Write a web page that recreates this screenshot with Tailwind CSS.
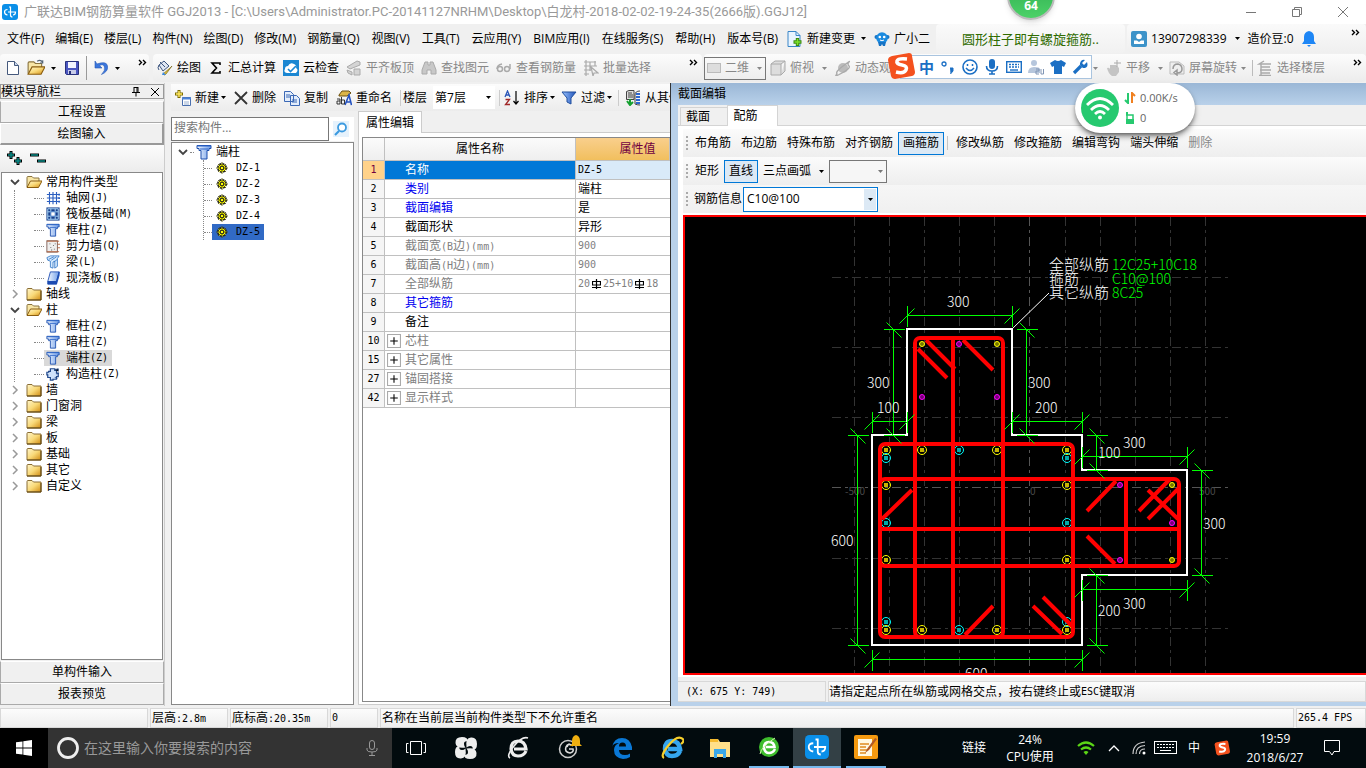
<!DOCTYPE html>
<html lang="zh-CN">
<head>
    <meta charset="UTF-8">
    <meta name="viewport" content="width=device-width, initial-scale=1.0">
    <title>广联达BIM钢筋算量软件 GGJ2013</title>
    <script src="https://cdn.jsdelivr.net/npm/@tailwindcss/browser@4"></script>
</head>
<body class="h-screen flex flex-col overflow-hidden bg-[#f0f0f0] text-black text-xs leading-4 whitespace-nowrap [font-family:'Open_Sans','Noto_Sans_CJK_SC',sans-serif]">

    <!-- icon sprite -->
    <svg class="absolute size-0">
        <defs>
            <linearGradient id="gold" x1="0" y1="0" x2="1" y2="1"><stop offset="0" stop-color="#fff6cc"/><stop offset=".5" stop-color="#f9d978"/><stop offset="1" stop-color="#d08a10"/></linearGradient>
            <linearGradient id="steel" x1="0" y1="0" x2="1" y2="0"><stop offset="0" stop-color="#f4f9ff"/><stop offset="1" stop-color="#6f9de8"/></linearGradient>
            <linearGradient id="funnel" x1="0" y1="0" x2="1" y2="0"><stop offset="0" stop-color="#9cc4ff"/><stop offset="1" stop-color="#1c50b8"/></linearGradient>
            <symbol id="logo" viewBox="0 0 16 16"><rect width="16" height="16" rx="3" fill="#0a8fe8"/><path d="M7 3h1.500v8q0 2 2 2M5.500 5.500Q2.500 5.500 2.500 8t3 3M6 8h7.500q0 3-2.500 3" fill="none" stroke="#fff" stroke-width="1.200"/></symbol>
            <symbol id="folder" viewBox="0 0 16 16"><path d="M1 3.500q0-1 1-1h4l1.500 1.500H15V14H1z" fill="url(#gold)" stroke="#8a6d35"/><path d="M1 14h14V5" fill="none" stroke="#5c430c"/></symbol>
            <symbol id="folder-open" viewBox="0 0 16 16"><path d="M1 13V3.500q0-1 1-1h4L7.500 4H13v3" fill="#f8e6a6" stroke="#8a7440"/><path d="M1 13.500 4.500 7H16l-3.500 6.500z" fill="url(#gold)" stroke="#8a5d10"/></symbol>
            <symbol id="column" viewBox="0 0 16 16"><path d="M1 1.500h14v3h-2v2h-2V15H5V6.500H3v-2H1z" fill="url(#steel)" stroke="#1c4fae"/><path d="M1 2h14M4 5h8" stroke="#2a63c8"/></symbol>
            <symbol id="axis" viewBox="0 0 16 16"><path d="M4 1v14M8 1v14M12 1v14M1 4h14M1 8h14M1 12h14" stroke="#2c5fc0" stroke-width="1.300"/><path d="M14 3h2v2h-2zM14 7h2v2h-2zM14 11h2v2h-2z" fill="#2c5fc0"/></symbol>
            <symbol id="raft" viewBox="0 0 16 16"><rect x=".5" y=".5" width="15" height="15" fill="#173f8c"/><path d="M2 2h12v12H2zM5.500 2v12M10.500 2v12M2 5.500h12M2 10.500h12" fill="none" stroke="#b8e2ff"/><rect x="5.500" y="5.500" width="5" height="5" fill="#fff" stroke="#2e67b9"/></symbol>
            <symbol id="wall" viewBox="0 0 16 16"><rect x="1" y="2" width="12" height="13" fill="#eee" stroke="#7a5a50"/><path d="M1 2.500h14M1 14.500h14M13 6h3M13 10h3" stroke="#b4603c"/><path d="M4 5h1v1H4zM8 7h1v1H8zM5 9h1v1H5zM9 11h1v1H9zM6 12h1v1H6zM10 5h1v1h-1z" fill="#444"/></symbol>
            <symbol id="beam" viewBox="0 0 16 16"><path d="M1 3 5 1h10l-2 3v9l-3 2V7l-2 1v7l-3-1V7L2 6z" fill="#d6ebff" stroke="#3a7cc8"/><path d="m3 5 6-3M6 6l6-4M9 8l4-3" stroke="#3a7cc8"/></symbol>
            <symbol id="slab" viewBox="0 0 16 16"><path d="M5 1h10l-3 11H2z" fill="url(#steel)" stroke="#1b4bb2"/><path d="M2 12h10v3H2zM12 12l3-11v4l-3 10" fill="#1b4bb2" stroke="#1b4bb2"/></symbol>
            <symbol id="tie" viewBox="0 0 16 16"><path d="M5 2h5v2h2v3h2v4h-2v3H8v1H5v-3H2V9H1V6h2V5h2z" fill="#cfe2fb" stroke="#234a8c" stroke-width="1.400"/><path d="m10 3 4-1v3M12 8l3-1M10 12l3 1" stroke="#234a8c"/></symbol>
            <symbol id="gear" viewBox="0 0 12 12"><circle cx="6" cy="6" r="4.200" fill="#ff0" stroke="#222" stroke-width="1.600" stroke-dasharray="2 1.300"/><path d="M6 0v12M0 6h12M2 2l8 8M10 2l-8 8" stroke="#4a4800" stroke-width=".8"/><circle cx="6" cy="6" r="1.800" fill="#ff0" stroke="#222"/></symbol>
            <symbol id="down" viewBox="0 0 5 3"><path d="M0 0h5L2.500 3z" fill="currentColor"/></symbol>
            <symbol id="open" viewBox="0 0 10 10"><path d="m1 3 4 4 4-4" fill="none" stroke="#444" stroke-width="1.800"/></symbol>
            <symbol id="shut" viewBox="0 0 10 10"><path d="m3 1 4 4-4 4" fill="none" stroke="#999" stroke-width="1.500"/></symbol>
            <symbol id="more" viewBox="0 0 9 7"><path d="m1 1 2.500 2.500L1 6M5 1l2.500 2.500L5 6" fill="none" stroke="#000" stroke-width="1.400"/></symbol>
            <symbol id="sogou" viewBox="0 0 28 28"><path d="M5 4 22 1q3 0 3 3l3 16q0 3-3 4L8 27q-3 0-4-3L1 8q0-3 4-4z" fill="#f4511e"/><path d="M20 7q-9-1-10 2t5 4 4 5-10 2" fill="none" stroke="#fff" stroke-width="3.600"/></symbol>
            <symbol id="rebar" viewBox="0 0 9 10"><path d="M4.500 0v10M0 8.500h9M.5 2.500h8v3.500h-8z" fill="none" stroke="#000" stroke-width="1.200"/></symbol>
        </defs>
    </svg>

    <!-- title bar -->
    <header class="h-6 shrink-0 flex items-center bg-white text-[#999] pl-0.5">
        <svg class="size-4"><use href="#logo"/></svg>
        <h1 class="ml-1.5 text-[13px] [font-family:Roboto,'Noto_Sans_CJK_SC',sans-serif]">广联达BIM钢筋算量软件 GGJ2013 - [C:\Users\Administrator.PC-20141127NRHM\Desktop\白龙村-2018-02-02-19-24-35(2666版).GGJ12]</h1>
        <div class="ml-auto flex items-center gap-9 pr-[18px]">
            <button aria-label="最小化"><svg class="w-2.5 h-2.5" viewBox="0 0 10 10"><path d="M0 5.500h10" stroke="#777"/></svg></button>
            <button aria-label="还原"><svg class="w-2.5 h-2.5" viewBox="0 0 10 10"><path d="M.5 2.500h7v7h-7zM2.500 2.500v-2h7v7h-2" fill="none" stroke="#777"/></svg></button>
            <button aria-label="关闭"><svg class="w-2.5 h-2.5" viewBox="0 0 10 10"><path d="m0 0 10 10M10 0 0 10" stroke="#777"/></svg></button>
        </div>
    </header>

    <!-- menu bar -->
    <nav class="h-[29px] shrink-0 flex items-center">
        <div class="flex items-center gap-3 pl-[7px] w-[781px] shrink-0">
            <div class="flex gap-[11px]">
                <button>文件(F)</button><button>编辑(E)</button><button>楼层(L)</button><button>构件(N)</button><button>绘图(D)</button><button>修改(M)</button><button>钢筋量(Q)</button>
            </div>
            <button>视图(V)</button><button>工具(T)</button><button>云应用(Y)</button><button>BIM应用(I)</button><button>在线服务(S)</button><button>帮助(H)</button><button>版本号(B)</button>
        </div>
        <button class="flex items-center ml-1.5 gap-1">
            <svg class="size-4" viewBox="0 0 16 16"><path d="M1 .5h8l4 4v11H1z" fill="#e8f4ff" stroke="#3a86c8"/><path d="M9 .5v4h4" fill="none" stroke="#3a86c8"/><path d="M10.500 7v8M6.500 11h8" stroke="#3a8a10" stroke-width="3.400"/><path d="M10.500 8v6M7.500 11h6" stroke="#7be02c" stroke-width="1.500"/></svg>
            新建变更<svg class="w-[5px] h-[3px] ml-0.5"><use href="#down"/></svg>
        </button>
        <button class="flex items-center ml-2 gap-1 w-[62px]">
            <svg class="size-4" viewBox="0 0 16 16"><circle cx="2.500" cy="6" r="2" fill="#1773c4"/><circle cx="13.500" cy="6" r="2" fill="#1773c4"/><circle cx="8" cy="7" r="5.800" fill="#1b8be0"/><path d="M4 11h8l-1 4H9l-1-2-1 2H5z" fill="#1773c4"/><circle cx="5.800" cy="6" r="1.300" fill="#fff"/><circle cx="10.200" cy="6" r="1.300" fill="#fff"/><path d="M6 9q2 1.500 4 0" stroke="#fff" fill="none"/></svg>广小二
        </button>
        <a href="#" class="h-full w-[189px] shrink-0 rounded-sm bg-linear-to-b from-[#fafafa] to-[#f1f1f1] flex items-center justify-center text-[13px] text-[#2f6b00]">圆形柱子即有螺旋箍筋..</a>
        <div class="h-full ml-0.5 flex-1 rounded-sm bg-linear-to-b from-[#fafafa] to-[#efefef] flex items-center pl-1 pr-1">
            <button class="flex items-center gap-1"><svg class="size-4" viewBox="0 0 16 16"><rect width="16" height="16" rx="2" fill="#3d93c9"/><circle cx="8" cy="5.500" r="2.800" fill="#fff"/><path d="M3 13V9.500h3L8 11l2-1.500h3V13z" fill="#fff"/></svg><span>13907298339</span><svg class="w-[5px] h-[3px] ml-1"><use href="#down"/></svg></button>
            <span class="ml-2">造价豆:0</span>
            <svg class="w-3.5 h-4 ml-2" viewBox="0 0 14 16"><path d="M7 0q5 1 5 6v4l2 3H0l2-3V6q0-5 5-6zM5 14h4l-2 2z" fill="#1e86f5"/></svg>
            <svg class="w-[9px] h-[7px] ml-auto mr-0.5 mb-3"><use href="#more"/></svg>
        </div>
    </nav>

    <!-- main toolbar -->
    <div class="h-[30px] shrink-0 flex gap-1 py-px">
        <div class="w-[149px] shrink-0 rounded-sm bg-linear-to-b from-[#fcfcfc] to-[#ececec] flex items-center pl-[5px]">
            <button aria-label="新建"><svg class="size-4" viewBox="0 0 16 16"><path d="M2.500 1.500h7l4 4v9h-11z" fill="#fff" stroke="#45597c"/><path d="M9.500 1.500v4h4" fill="#c8d6ec" stroke="#45597c"/></svg></button>
            <button aria-label="打开" class="ml-1.5"><svg class="size-[18px]" viewBox="0 0 16 16"><use href="#folder-open"/><path d="M9 2q3-2 5 1M14 1v2.500h-2.500" fill="none" stroke="#567"/></svg></button>
            <svg class="w-[5px] h-[3px] ml-1.5"><use href="#down"/></svg>
            <button aria-label="保存" class="ml-2"><svg class="size-4" viewBox="0 0 16 16"><path d="M1.500 1.500h13v13h-12l-1-1z" fill="#4a55c0" stroke="#27307c"/><path d="M4 2h8v6H4z" fill="#f2f4ff"/><path d="M4 10h8v4H4z" fill="#c8cce8"/><path d="M5 11h2v3H5z" fill="#27307c"/></svg></button>
            <span class="w-px h-6 bg-[#999] ml-1.5"></span>
            <button aria-label="撤销" class="ml-1.5"><svg class="size-4" viewBox="0 0 16 16"><path d="M2 1v7h7L6.500 5.500q4-2 5 1.500t-3 7.500q7-3 6-8.500T4 4z" fill="#3b76dc" stroke="#2659b5" stroke-width=".6"/></svg></button>
            <svg class="w-[5px] h-[3px] ml-1.5"><use href="#down"/></svg>
            <svg class="w-[9px] h-[7px] ml-auto mr-0.5 mb-3"><use href="#more"/></svg>
        </div>
        <div class="w-[549px] shrink-0 rounded-sm bg-linear-to-b from-[#fcfcfc] to-[#ececec] flex items-center gap-[7px] pl-1 text-[#888]">
            <button class="flex items-center gap-1 text-black"><svg class="size-4" viewBox="0 0 16 16"><path d="m2 5 5-4 5 5-6 5z" fill="#dfe6f2" stroke="#3c557f"/><path d="M2 5q-2 3 0 5M3 2l5 5" stroke="#3c557f" fill="none"/><path d="m15 6-6 8q-2 2-3 0l7-6z" fill="#e8c53a" stroke="#77651a" stroke-width=".7"/><path d="m6 12 3 3h-4z" fill="#3c8ae0"/></svg>绘图</button>
            <button class="flex items-center gap-1 text-black"><svg class="size-4" viewBox="0 0 16 16"><path d="M12 5V3H4l4.500 5L4 13h8v-2" fill="none" stroke="#000" stroke-width="1.600"/></svg>汇总计算</button>
            <button class="flex items-center gap-1 text-black"><svg class="size-4" viewBox="0 0 16 16"><rect width="16" height="16" fill="#1b87d2"/><path d="M4 13q-4-1-2-4 0-3 3-3 2-4 6-2 3 1 2 4 3 2 0 5z" fill="#fff"/><path d="m5 9 2.500 2.500L13 6" fill="none" stroke="#1b87d2" stroke-width="1.600"/></svg>云检查</button>
            <button class="flex items-center gap-1" disabled><svg class="size-4" viewBox="0 0 16 16"><path d="m1 7 10-6 3 1v3L4 9zM1 10l5 2v3l-4-2zM8 9h6v6H8z" fill="#d4d4d4" stroke="#aaa"/></svg>平齐板顶</button>
            <button class="flex items-center gap-1" disabled><svg class="size-4" viewBox="0 0 16 16"><path d="M4 2h3v3h2V2h3l3 8v4h-5v-4H6v4H1v-4z" fill="#c8c8c8" stroke="#aaa"/></svg>查找图元</button>
            <button class="flex items-center gap-1" disabled><svg class="size-4" viewBox="0 0 16 16"><path d="M6 4Q1 5 1 9m13-5v5" fill="none" stroke="#aaa" stroke-width="1.500"/><circle cx="4" cy="9" r="2.500" fill="none" stroke="#aaa" stroke-width="1.500"/><circle cx="11" cy="9" r="2.500" fill="none" stroke="#aaa" stroke-width="1.500"/></svg>查看钢筋量</button>
            <button class="flex items-center gap-1" disabled><svg class="size-4" viewBox="0 0 16 16"><path d="M1 2h12M1 6h13M1 10h7M1 14h5M3 0v16M7 2v9M12 1v5M8 7l7 6h-4l-1 3z" fill="none" stroke="#aaa" stroke-width="1.200"/></svg>批量选择</button>
            <svg class="w-[9px] h-[7px] ml-auto mr-1 mb-3"><use href="#more"/></svg>
        </div>
        <div class="flex-1 rounded-sm bg-linear-to-b from-[#fcfcfc] to-[#ececec] flex items-center text-[#888] -ml-0.5">
            <button class="flex items-center gap-1 border border-[#777] h-[23px] w-[62px] pl-0.5"><svg class="w-3.5 h-2.5" viewBox="0 0 14 10"><rect x=".5" y=".5" width="13" height="9" fill="#ddd" stroke="#bbb"/></svg>二维<svg class="w-[5px] h-[3px] ml-1"><use href="#down"/></svg></button>
            <button class="flex items-center gap-1 ml-1" disabled><svg class="size-4" viewBox="0 0 16 16"><path d="M1 4h10v11H1zM1 4l4-3h10l-4 3M15 1v10l-4 4" fill="#ddd" stroke="#aaa"/></svg>俯视<svg class="w-[5px] h-[3px] ml-1"><use href="#down"/></svg></button>
            <button class="flex items-center gap-1 ml-2" disabled><svg class="size-4" viewBox="0 0 16 16"><circle cx="8" cy="8" r="5" fill="#bbb"/><path d="M2 14Q0 12 8 6t6-4 0 4-7 7-5 1z" fill="none" stroke="#aaa" stroke-width="1.300"/></svg>动态观察</button>
            <button class="flex items-center gap-1 ml-auto" disabled><svg class="w-[5px] h-[3px] mr-1"><use href="#down"/></svg><svg class="size-4" viewBox="0 0 16 16"><path d="M1 8q2-1 3 1V5h6l3 3v4l-3 4H6q-4-3-5-8z" fill="#c4c4c4"/><path d="M11 0v7M8 3h7" stroke="#aaa"/></svg>平移<svg class="w-[5px] h-[3px] ml-1"><use href="#down"/></svg></button>
            <button class="flex items-center gap-1 ml-1.5" disabled><svg class="size-4" viewBox="0 0 16 16"><path d="M1 2h9l5 4v8H1z" fill="#eee" stroke="#bbb"/><path d="M4 9q0-5 5-5 4 1 4 5t-5 4M8 10v5l-3-2.500z" fill="none" stroke="#999" stroke-width="1.500"/></svg>屏幕旋转<svg class="w-[5px] h-[3px]"><use href="#down"/></svg></button>
            <span class="w-px h-4 bg-[#bbb] ml-1.5 mr-1"></span>
            <button class="flex items-center gap-1" disabled><svg class="size-4" viewBox="0 0 16 16"><path d="M7 1 2 4h12M4 7h9M3 10h11M4 13h9M2 15.500h12M4 4v11" fill="none" stroke="#aaa" stroke-width="1.400"/></svg>选择楼层</button>
            <svg class="w-[9px] h-[7px] ml-7 mr-1 mb-3"><use href="#more"/></svg>
        </div>
    </div>

    <main class="flex-1 min-h-0 flex [font-family:'DejaVu_Sans_Mono','Noto_Sans_CJK_SC',monospace]">

        <!-- module navigation -->
        <aside class="w-[165px] shrink-0 flex flex-col pt-px pb-px border-r border-[#ccc]">
            <div class="h-[15px] border border-[#999] flex items-center shrink-0">
                <h2>模块导航栏</h2>
                <svg class="size-2.5 ml-auto" viewBox="0 0 10 10"><path d="M3 0v5M7 0v5M3 .5h4M1 5.500h8M5 5v4.500M6 0v5" stroke="#000"/></svg>
                <svg class="size-2 ml-2.5 mr-1" viewBox="0 0 8 8"><path d="m0 0 8 8M8 0 0 8" stroke="#000"/></svg>
            </div>
            <button class="h-[22px] mt-0.5 border border-[#aaa] border-t-white shrink-0">工程设置</button>
            <button class="h-[22px] border border-b-2 border-r-2 border-[#999] border-t-white border-l-white shrink-0">绘图输入</button>
            <div class="h-[27px] shrink-0 bg-linear-to-b from-[#fcfcfc] to-[#ececec] flex items-center gap-2 pl-1.5">
                <button aria-label="展开"><svg class="w-4 h-4" viewBox="0 0 16 16"><path d="M5 0v8M1 4h8M12 6v8M8 10h8" stroke="#000" stroke-width="3"/><path d="M5 1v6M2 4h6M12 7v6M9 10h6" stroke="#0a8a86" stroke-width="1.500"/></svg></button>
                <button aria-label="折叠"><svg class="w-4 h-4" viewBox="0 0 16 16"><path d="M0 4h9M7 10h9" stroke="#000" stroke-width="3"/><path d="M1 4h7M8 10h7" stroke="#0a8a86" stroke-width="1.500"/></svg></button>
            </div>
            <ul class="flex-1 min-h-0 mx-px border border-[#888] bg-white pt-px pl-2">
                <li class="h-4 flex items-center"><svg class="size-2.5"><use href="#open"/></svg><svg class="size-4 ml-1.5 mr-1"><use href="#folder-open"/></svg>常用构件类型</li>
                <li><ul class="ml-1 border-l border-dotted border-[#888] pl-[19px]">
                    <li class="h-4 flex items-center"><span class="w-2.5 border-t border-dotted border-[#888] mr-0.5"></span><svg class="size-3.5 mr-1.5"><use href="#axis"/></svg>轴网<span class="text-[10px]">(J)</span></li>
                    <li class="h-4 flex items-center"><span class="w-2.5 border-t border-dotted border-[#888] mr-0.5"></span><svg class="size-3.5 mr-1.5"><use href="#raft"/></svg>筏板基础<span class="text-[10px]">(M)</span></li>
                    <li class="h-4 flex items-center"><span class="w-2.5 border-t border-dotted border-[#888] mr-0.5"></span><svg class="size-3.5 mr-1.5"><use href="#column"/></svg>框柱<span class="text-[10px]">(Z)</span></li>
                    <li class="h-4 flex items-center"><span class="w-2.5 border-t border-dotted border-[#888] mr-0.5"></span><svg class="size-3.5 mr-1.5"><use href="#wall"/></svg>剪力墙<span class="text-[10px]">(Q)</span></li>
                    <li class="h-4 flex items-center"><span class="w-2.5 border-t border-dotted border-[#888] mr-0.5"></span><svg class="size-3.5 mr-1.5"><use href="#beam"/></svg>梁<span class="text-[10px]">(L)</span></li>
                    <li class="h-4 flex items-center"><span class="w-2.5 border-t border-dotted border-[#888] mr-0.5"></span><svg class="size-3.5 mr-1.5"><use href="#slab"/></svg>现浇板<span class="text-[10px]">(B)</span></li>
                </ul></li>
                <li class="h-4 flex items-center"><svg class="size-2.5"><use href="#shut"/></svg><svg class="size-4 ml-1.5 mr-1"><use href="#folder"/></svg>轴线</li>
                <li class="h-4 flex items-center"><svg class="size-2.5"><use href="#open"/></svg><svg class="size-4 ml-1.5 mr-1"><use href="#folder-open"/></svg>柱</li>
                <li><ul class="ml-1 border-l border-dotted border-[#888] pl-[19px]">
                    <li class="h-4 flex items-center"><span class="w-2.5 border-t border-dotted border-[#888] mr-0.5"></span><svg class="size-3.5 mr-1.5"><use href="#column"/></svg>框柱<span class="text-[10px]">(Z)</span></li>
                    <li class="h-4 flex items-center"><span class="w-2.5 border-t border-dotted border-[#888] mr-0.5"></span><svg class="size-3.5 mr-1.5"><use href="#column"/></svg>暗柱<span class="text-[10px]">(Z)</span></li>
                    <li class="h-4 flex items-center"><span class="w-2.5 border-t border-dotted border-[#888]"></span><span class="h-4 flex items-center bg-[#d9d9d9] pl-0.5 pr-1"><svg class="size-3.5 mr-1.5"><use href="#column"/></svg>端柱<span class="text-[10px]">(Z)</span></span></li>
                    <li class="h-4 flex items-center"><span class="w-2.5 border-t border-dotted border-[#888] mr-0.5"></span><svg class="size-3.5 mr-1.5"><use href="#tie"/></svg>构造柱<span class="text-[10px]">(Z)</span></li>
                </ul></li>
                <li class="h-4 flex items-center"><svg class="size-2.5"><use href="#shut"/></svg><svg class="size-4 ml-1.5 mr-1"><use href="#folder"/></svg>墙</li>
                <li class="h-4 flex items-center"><svg class="size-2.5"><use href="#shut"/></svg><svg class="size-4 ml-1.5 mr-1"><use href="#folder"/></svg>门窗洞</li>
                <li class="h-4 flex items-center"><svg class="size-2.5"><use href="#shut"/></svg><svg class="size-4 ml-1.5 mr-1"><use href="#folder"/></svg>梁</li>
                <li class="h-4 flex items-center"><svg class="size-2.5"><use href="#shut"/></svg><svg class="size-4 ml-1.5 mr-1"><use href="#folder"/></svg>板</li>
                <li class="h-4 flex items-center"><svg class="size-2.5"><use href="#shut"/></svg><svg class="size-4 ml-1.5 mr-1"><use href="#folder"/></svg>基础</li>
                <li class="h-4 flex items-center"><svg class="size-2.5"><use href="#shut"/></svg><svg class="size-4 ml-1.5 mr-1"><use href="#folder"/></svg>其它</li>
                <li class="h-4 flex items-center"><svg class="size-2.5"><use href="#shut"/></svg><svg class="size-4 ml-1.5 mr-1"><use href="#folder"/></svg>自定义</li>
            </ul>
            <button class="h-[22px] mt-px border border-[#aaa] border-t-white shrink-0">单构件输入</button>
            <button class="h-[22px] border border-[#aaa] border-t-white shrink-0">报表预览</button>
        </aside>

        <!-- component list + properties -->
        <section class="w-[505px] shrink-0 flex flex-col overflow-hidden">
            <div class="h-[27px] shrink-0 mt-px ml-1.5 bg-linear-to-b from-[#fcfcfc] to-[#ececec] flex items-center pl-1 [&>*]:shrink-0 [font-family:'Open_Sans','Noto_Sans_CJK_SC',sans-serif]">
                <button class="flex items-center gap-1"><svg class="size-4" viewBox="0 0 16 16"><path d="M4 0v8M0 4h8" stroke="#7d6c00" stroke-width="3"/><path d="M4 1v6M1 4h6" stroke="#ffe860" stroke-width="1.500"/><path d="M7.500 7.500h8v8h-8z" fill="#fff" stroke="#4a6fae"/><path d="M7 8.500h9" stroke="#4a82d8" stroke-width="2"/><path d="M9 12h5M9 14h5" stroke="#9ab0d0"/></svg>新建<svg class="w-[5px] h-[3px] -ml-0.5"><use href="#down"/></svg></button>
                <button class="flex items-center gap-1 ml-2"><svg class="size-3.5" viewBox="0 0 14 14"><path d="m1 1 12 12M13 1 1 13" stroke="#333" stroke-width="1.800"/></svg>删除</button>
                <button class="flex items-center gap-1 ml-2"><svg class="size-4" viewBox="0 0 16 16"><path d="M.5 1.500h6l3 3v7h-9zM6.500 5.500h6l3 3v7h-9z" fill="#e3edfb" stroke="#3b68b5"/><path d="M2 5h4M2 7h4M8 10h5M8 12h5" stroke="#3b68b5"/></svg>复制</button>
                <button class="flex items-center gap-1 ml-2"><svg class="size-4" viewBox="0 0 16 16"><path d="m3 5 3-4h7l2 2-4 3H3z" fill="#dcb548" stroke="#6c5010"/><path d="m9 15 4-10 2.500 10M10.500 12h4" fill="none" stroke="#2452c0" stroke-width="1.600"/><path d="M1 9h3v5H1v-3h3M5.500 7v7h3v-4h-3" fill="none" stroke="#222" stroke-width=".9"/></svg>重命名</button>
                <span class="w-px h-4 bg-[#ccc] ml-2"></span>
                <label for="floor" class="ml-0.5">楼层</label>
                <span class="ml-1.5 h-[23px] w-[62px] bg-white relative flex items-center">
                    <select id="floor" class="appearance-none w-full h-full pl-0.5 outline-none"><option>第7层</option></select>
                    <svg class="w-[5px] h-[3px] absolute right-1 top-2.5 pointer-events-none"><use href="#down"/></svg>
                </span>
                <span class="w-px h-4 bg-[#ccc] ml-1"></span>
                <button class="flex items-center gap-1 ml-1"><svg class="size-4" viewBox="0 0 16 16"><path d="m1 7 2.500-6L6 7M2 5h3" fill="none" stroke="#2a56b8" stroke-width="1.300"/><path d="M1.500 9.500h4l-4 5h4.500" fill="none" stroke="#a02828" stroke-width="1.300"/><path d="M12 1v13M9.500 11l2.500 3 2.500-3" fill="none" stroke="#000" stroke-width="1.200"/></svg>排序<svg class="w-[5px] h-[3px] -ml-0.5"><use href="#down"/></svg></button>
                <button class="flex items-center gap-1 ml-1.5"><svg class="size-4" viewBox="0 0 16 16"><path d="M1 2h14L10 8v6l-4-2V8z" fill="url(#funnel)" stroke="#204f9d"/></svg>过滤<svg class="w-[5px] h-[3px] -ml-0.5"><use href="#down"/></svg></button>
                <span class="w-px h-4 bg-[#ccc] ml-1.5"></span>
                <button class="flex items-center gap-1 ml-1.5"><svg class="size-4" viewBox="0 0 16 16"><path d="M1.500 1.500 4 .5h5v9h-7.500z" fill="#ddd" stroke="#444"/><path d="M3 3h4M3 5h5M3 7h5M15 1q-5 0-5 4v9q2 1 5 1" fill="none" stroke="#444"/><path d="M11 4h4M11 7h4M11 10h4M11 13h4" stroke="#2b66d0" stroke-width="1.800"/><path d="M5 9v5M2 11l3 4 3-3" fill="none" stroke="#15a030" stroke-width="2"/></svg>从其他楼层</button>
            </div>
            <div class="flex-1 min-h-0 flex pl-1.5 pb-px">
                <div class="w-[183px] shrink-0 flex flex-col pt-1.5">
                    <div class="flex items-center h-6 shrink-0 bg-white">
                        <input type="text" aria-label="搜索构件" placeholder="搜索构件..." class="w-[158px] h-full border border-[#777] bg-white px-0.5 pb-1 outline-none placeholder:text-[#777] [font-family:'Open_Sans','Noto_Sans_CJK_SC',sans-serif]">
                        <button aria-label="搜索" class="ml-1 bg-[#e6f2fc]"><svg class="size-4" viewBox="0 0 16 16"><circle cx="9" cy="6.500" r="4" fill="#fff" stroke="#3b9ae0" stroke-width="1.800"/><path d="m6 10-4 4" stroke="#3b9ae0" stroke-width="2.200"/></svg></button>
                    </div>
                    <ul class="flex-1 min-h-0 mt-px border border-[#888] bg-white pl-1.5 pt-px">
                        <li class="h-4 flex items-center"><svg class="size-2.5"><use href="#open"/></svg><span class="w-1 border-t border-dotted border-[#888] mx-0.5"></span><svg class="size-4 mr-1"><use href="#column"/></svg>端柱</li>
                        <li><ul class="ml-[25px] border-l border-dotted border-[#888]">
                            <li class="h-4 flex items-center"><span class="w-2 border-t border-dotted border-[#888]"></span><span class="h-4 flex items-center gap-2 px-1"><svg class="size-3"><use href="#gear"/></svg><span class="text-[10px]">DZ-1</span></span></li>
                            <li class="h-4 flex items-center"><span class="w-2 border-t border-dotted border-[#888]"></span><span class="h-4 flex items-center gap-2 px-1"><svg class="size-3"><use href="#gear"/></svg><span class="text-[10px]">DZ-2</span></span></li>
                            <li class="h-4 flex items-center"><span class="w-2 border-t border-dotted border-[#888]"></span><span class="h-4 flex items-center gap-2 px-1"><svg class="size-3"><use href="#gear"/></svg><span class="text-[10px]">DZ-3</span></span></li>
                            <li class="h-4 flex items-center"><span class="w-2 border-t border-dotted border-[#888]"></span><span class="h-4 flex items-center gap-2 px-1"><svg class="size-3"><use href="#gear"/></svg><span class="text-[10px]">DZ-4</span></span></li>
                            <li class="h-4 flex items-center"><span class="w-2 border-t border-dotted border-[#888]"></span><span class="h-4 flex items-center gap-2 px-1 bg-[#316ac5]"><svg class="size-3"><use href="#gear"/></svg><span class="text-[10px]">DZ-5</span></span></li>
                        </ul></li>
                    </ul>
                </div>
                <div class="flex-1 min-w-0 ml-1 flex flex-col border-l border-b border-[#ccc]">
                    <div class="flex h-[22px] shrink-0">
                        <button class="w-[63px] bg-white border-t border-r border-[#ccc]">属性编辑</button><span class="flex-1 border-b border-[#ccc]"></span>
                    </div>
                    <div class="flex-1 min-h-0 bg-white pt-1 pl-[3px] pb-0.5">
                        <div class="h-full border-l border-t border-b border-[#888]">
                            <table class="w-full table-fixed border-separate border-spacing-0">
                                <thead>
                                    <tr class="h-[23px] [&>th]:font-normal [&>th]:border-r [&>th]:border-b [&>th]:border-[#c0c0c0] bg-linear-to-b from-[#fbfbfb] to-[#eee]"><th class="w-[22px]"></th><th class="w-[191px]">属性名称</th><th class="bg-linear-to-b from-[#f9cf8c] to-[#f1bf5d] text-[#700040] pl-[30px]">属性值</th></tr>
                                </thead>
                                <tbody class="[&_td]:border-r [&_td]:border-b [&_td]:border-[#c0c0c0] [&_td]:p-0 [&_td:last-child]:border-r-0 [&_td:last-child]:pl-0.5 [&_td:first-child]:text-center [&_tr]:h-[19px] [&_tr]:leading-4">
                                    <tr><td class="bg-[#ffd28a] text-[#700040] text-[10px]">1</td><td class="bg-[#0078d7] text-white"><span class="pl-5">名称</span></td><td class="bg-[#d9eaf9] text-[10px]">DZ-5</td></tr>
                                    <tr><td class="text-[10px] bg-[#f5f5f5]">2</td><td class="text-[#0000f0]"><span class="pl-5">类别</span></td><td>端柱</td></tr>
                                    <tr><td class="text-[10px] bg-[#f5f5f5]">3</td><td class="text-[#0000f0]"><span class="pl-5">截面编辑</span></td><td>是</td></tr>
                                    <tr><td class="text-[10px] bg-[#f5f5f5]">4</td><td><span class="pl-5">截面形状</span></td><td>异形</td></tr>
                                    <tr><td class="text-[10px] bg-[#f5f5f5]">5</td><td class="text-[#808080]"><span class="pl-5">截面宽<span class="text-[10px]">(B</span>边<span class="text-[10px]">)(mm)</span></span></td><td class="text-[10px] text-[#808080]">900</td></tr>
                                    <tr><td class="text-[10px] bg-[#f5f5f5]">6</td><td class="text-[#808080]"><span class="pl-5">截面高<span class="text-[10px]">(H</span>边<span class="text-[10px]">)(mm)</span></span></td><td class="text-[10px] text-[#808080]">900</td></tr>
                                    <tr><td class="text-[10px] bg-[#f5f5f5]">7</td><td class="text-[#808080]"><span class="pl-5">全部纵筋</span></td><td class="text-[10px] text-[#808080]"><span class="flex items-center gap-0.5">20<svg class="w-[9px] h-2.5"><use href="#rebar"/></svg>25+10<svg class="w-[9px] h-2.5"><use href="#rebar"/></svg>18</span></td></tr>
                                    <tr><td class="text-[10px] bg-[#f5f5f5]">8</td><td class="text-[#0000f0]"><span class="pl-5">其它箍筋</span></td><td></td></tr>
                                    <tr><td class="text-[10px] bg-[#f5f5f5]">9</td><td><span class="pl-5">备注</span></td><td></td></tr>
                                    <tr><td class="text-[10px] bg-[#f5f5f5]">10</td><td class="text-[#808080]"><span class="flex items-center gap-1 pl-0.5"><svg class="size-3.5" viewBox="0 0 13 13"><path d="M.5.5h12v12H.5z" fill="#fff" stroke="#aaa"/><path d="M3 6.500h7M6.500 3v7" stroke="#000"/></svg>芯柱</span></td><td></td></tr>
                                    <tr><td class="text-[10px] bg-[#f5f5f5]">15</td><td class="text-[#808080]"><span class="flex items-center gap-1 pl-0.5"><svg class="size-3.5" viewBox="0 0 13 13"><path d="M.5.5h12v12H.5z" fill="#fff" stroke="#aaa"/><path d="M3 6.500h7M6.500 3v7" stroke="#000"/></svg>其它属性</span></td><td></td></tr>
                                    <tr><td class="text-[10px] bg-[#f5f5f5]">27</td><td class="text-[#808080]"><span class="flex items-center gap-1 pl-0.5"><svg class="size-3.5" viewBox="0 0 13 13"><path d="M.5.5h12v12H.5z" fill="#fff" stroke="#aaa"/><path d="M3 6.500h7M6.500 3v7" stroke="#000"/></svg>锚固搭接</span></td><td></td></tr>
                                    <tr><td class="text-[10px] bg-[#f5f5f5]">42</td><td class="text-[#808080]"><span class="flex items-center gap-1 pl-0.5"><svg class="size-3.5" viewBox="0 0 13 13"><path d="M.5.5h12v12H.5z" fill="#fff" stroke="#aaa"/><path d="M3 6.500h7M6.500 3v7" stroke="#000"/></svg>显示样式</span></td><td></td></tr>
                                </tbody>
                            </table>
                        </div>
                    </div>
                </div>
            </div>
        </section>

        <!-- section editor -->
        <section class="flex-1 min-w-0 flex flex-col border-l border-[#333] bg-[#b9d1ea] pl-[7px] pb-1">
            <h2 class="h-[22px] -ml-[7px] pl-[7px] shrink-0 bg-linear-to-b from-[#9ab7d6] to-[#b9d1ea] flex items-center [font-family:'Open_Sans','Noto_Sans_CJK_SC',sans-serif]">截面编辑</h2>
            <div class="h-[21px] shrink-0 flex items-end bg-[#f0f0f0]">
                <span class="w-0.5 h-full border-b border-[#d4d4d4]"></span>
                <button class="w-[47px] h-[19px] border border-r-0 border-[#d4d4d4] pr-3">截面</button>
                <button class="w-[51px] h-[21px] border border-b-0 border-[#d4d4d4] bg-white pr-3.5">配筋</button>
                <span class="flex-1 h-full border-b border-[#d4d4d4]"></span>
            </div>
            <div class="flex-1 min-h-0 flex flex-col bg-white pt-[3px] pl-[5px] [font-family:'Open_Sans','Noto_Sans_CJK_SC',sans-serif]">
                <div class="h-7 shrink-0 bg-linear-to-b from-[#fbfbfb] to-[#eee] flex items-center gap-2.5 pl-[3px]">
                    <span class="h-3.5 border-l-2 border-dotted border-[#aaa] -mr-[3px]"></span>
                    <button>布角筋</button><button>布边筋</button><button>特殊布筋</button><button>对齐钢筋</button>
                    <button class="h-[23px] border border-[#0078d7] bg-[#dce9f5] px-1 -mx-[5px]">画箍筋</button>
                    <span class="w-px h-3.5 bg-[#c4c4c4] -mx-[2px]"></span>
                    <button>修改纵筋</button><button>修改箍筋</button><button>编辑弯钩</button><button>端头伸缩</button><button class="text-[#888]" disabled>删除</button>
                </div>
                <div class="h-7 shrink-0 bg-linear-to-b from-[#fbfbfb] to-[#eee] flex items-center gap-[5px] pl-[3px]">
                    <span class="h-3.5 border-l-2 border-dotted border-[#aaa] mr-0.5"></span>
                    <button>矩形</button>
                    <button class="h-[23px] border border-[#0078d7] bg-[#dce9f5] px-1">直线</button>
                    <button class="flex items-center gap-2">三点画弧<svg class="w-[5px] h-[3px]"><use href="#down"/></svg></button>
                    <span class="relative h-[23px] w-[58px] text-[#777]"><select aria-label="弧半径" class="appearance-none size-full border border-[#777] bg-[#f6f6f6] opacity-100" disabled><option></option></select><svg class="w-[5px] h-[3px] absolute right-1 top-2.5"><use href="#down"/></svg></span>
                </div>
                <div class="h-[30px] shrink-0 bg-linear-to-b from-[#f6f6f6] to-[#f0f0f0] flex items-center pl-[3px] border-b-2 border-white">
                    <span class="h-3.5 border-l-2 border-dotted border-[#aaa] mr-1.5"></span>
                    <label for="rebarInfo">钢筋信息</label>
                    <span class="flex items-center h-[25px] w-[135px] ml-px border border-[#0078d7] bg-white p-px">
                        <input id="rebarInfo" type="text" value="C10@100" class="flex-1 min-w-0 pl-0.5 outline-none">
                        <button aria-label="展开列表" class="h-full w-3 bg-[#dce9f5] flex items-center justify-center"><svg class="w-[5px] h-[3px]"><use href="#down"/></svg></button>
                    </span>
                </div>

                <!-- drawing canvas -->
                <div class="flex-1 min-h-0 border-2 border-r-0 border-[#f00] bg-black overflow-hidden">
                    <svg class="w-[681px] h-[456px]" viewBox="685 217 681 456">
                        <defs>
                            <g id="hx" fill="none" stroke="#0f0"><path d="M0-10v21" shape-rendering="crispEdges"/><path d="m-8 8 15-15"/></g>
                            <g id="vx" fill="none" stroke="#0f0"><path d="M-10 0h21" shape-rendering="crispEdges"/><path d="m-7-7 15 15"/></g>
                            <g id="yb"><circle r="4.500" fill="none" stroke="#ff0"/><path d="M-2-2h4v4h-4z" fill="#c8b400"/></g>
                            <g id="cb"><circle r="4.500" fill="none" stroke="#0ff"/><path d="M-2-2h4v4h-4z" fill="#0aa"/></g>
                            <g id="ys"><circle r="2.500" fill="#770" stroke="#ff0"/></g>
                            <g id="ms"><circle r="2.500" fill="#707" stroke="#f0f"/></g>
                        </defs>
                        <g stroke="#333" stroke-dasharray="9 4 3 4" shape-rendering="crispEdges">
                            <path d="M854.500 217v456M889.500 217v456M924.500 217v456M959.500 217v456M994.500 217v456M1065.500 217v456M1100.500 217v456M1135.500 217v456M1170.500 217v456M1205.500 217v456"/>
                            <path d="M832 277.500h396M832 347.500h396M832 417.500h396M832 558.500h396M832 628.500h396"/>
                            <path d="M1029.500 217v456M832 487.500h396" stroke="#555"/>
                        </g>
                        <g fill="#4a4a4a" font-family="Noto Sans CJK SC" font-size="10"><text x="845" y="495">-500</text><text x="1030" y="495">0</text><text x="1199" y="495">500</text></g>

                        <g fill="none" stroke="#0f0" shape-rendering="crispEdges">
                            <path d="M907 315.500h105M872 421.500h35M1012 421.500h70M1082 456.500h105M1082 589.500h105M872 659.500h210"/>
                            <path d="M893.500 329v106M1026.500 329v106M1096.500 435v35M1201.500 470v105M1096.500 575v70M857.500 435v210"/>
                        </g>
                        <use href="#yb" x="886" y="450"/><use href="#yb" x="922" y="450"/><use href="#cb" x="959" y="450"/><use href="#yb" x="997" y="450"/><use href="#yb" x="1067" y="450"/>
                        <use href="#cb" x="886" y="458"/><use href="#cb" x="1067" y="458"/>
                        <use href="#yb" x="886" y="485"/><use href="#yb" x="1067" y="485"/><use href="#cb" x="886" y="523"/><use href="#cb" x="1067" y="523"/><use href="#yb" x="886" y="560"/><use href="#yb" x="1067" y="560"/>
                        <use href="#cb" x="886" y="622"/><use href="#cb" x="1067" y="622"/><use href="#yb" x="886" y="630"/><use href="#yb" x="922" y="630"/><use href="#cb" x="959" y="630"/><use href="#yb" x="997" y="630"/><use href="#yb" x="1067" y="630"/>
                        <use href="#ys" x="922" y="344"/><use href="#ms" x="959" y="344"/><use href="#ys" x="997" y="344"/><use href="#ms" x="922" y="397"/><use href="#ms" x="997" y="397"/>
                        <use href="#ms" x="1120" y="485"/><use href="#ys" x="1172" y="485"/><use href="#ms" x="1172" y="523"/><use href="#ms" x="1120" y="560"/><use href="#ys" x="1172" y="560"/>

                        <!-- stirrups -->
                        <g fill="none" stroke="#f00" stroke-width="4">
                            <rect x="880" y="444" width="193" height="193" rx="5"/>
                            <rect x="915" y="338" width="88" height="299" rx="5"/>
                            <rect x="880" y="479" width="299" height="87" rx="5"/>
                            <path d="M953 338v299M880 529h297M1126 479v87"/>
                            <path d="m918 349 29 29M926 340l29 29M963 340l30 30M882 519l30-29M1087 511l29-30M1087 536l28 28M1139 511l31-32M1148 519l30-30M1148 490l30 29M965 635l28-29M1033 606l29 28M1043 597l29 29"/>
                        </g>
                        <path d="M907 329h105v106h70v35h105v105h-105v70H872V435h35z" fill="none" stroke="#fff" stroke-width="2" shape-rendering="crispEdges"/>
                        <path d="m1012 329 37-36" stroke="#fff"/>

                        <use href="#hx" x="907.500" y="315.500"/><use href="#hx" x="1012.500" y="315.500"/><use href="#hx" x="872.500" y="421.500"/><use href="#hx" x="907.500" y="421.500"/><use href="#hx" x="1012.500" y="421.500"/><use href="#hx" x="1082.500" y="421.500"/>
                        <use href="#hx" x="1082.500" y="456.500"/><use href="#hx" x="1187.500" y="456.500"/><use href="#hx" x="1082.500" y="589.500"/><use href="#hx" x="1187.500" y="589.500"/><use href="#hx" x="872.500" y="659.500"/><use href="#hx" x="1082.500" y="659.500"/>
                        <use href="#vx" x="893.500" y="329.500"/><use href="#vx" x="893.500" y="435.500"/><use href="#vx" x="1026.500" y="329.500"/><use href="#vx" x="1026.500" y="435.500"/><use href="#vx" x="1096.500" y="435.500"/><use href="#vx" x="1096.500" y="470.500"/>
                        <use href="#vx" x="1201.500" y="470.500"/><use href="#vx" x="1201.500" y="575.500"/><use href="#vx" x="1096.500" y="575.500"/><use href="#vx" x="1096.500" y="645.500"/><use href="#vx" x="857.500" y="435.500"/><use href="#vx" x="857.500" y="645.500"/>

                        <g fill="#fff" font-family="Noto Sans CJK SC" font-size="14" font-weight="300">
                            <text x="947" y="307">300</text><text x="867" y="388">300</text><text x="877" y="413">100</text><text x="1028" y="388">300</text><text x="1035" y="413">200</text><text x="1098" y="458">100</text><text x="1123" y="448">300</text><text x="1203" y="529">300</text><text x="1123" y="609">300</text><text x="1098" y="616">200</text><text x="831" y="546">600</text><text x="965" y="679">600</text>
                        </g>
                        <g fill="#fff" font-family="Noto Sans CJK SC" font-size="15" font-weight="300"><text x="1049" y="270">全部纵筋</text><text x="1049" y="284">箍筋</text><text x="1049" y="298">其它纵筋</text></g>
                        <g fill="#0f0" font-family="Noto Sans CJK SC" font-size="14" font-weight="300"><text x="1112" y="270">12C25+10C18</text><text x="1112" y="284">C10@100</text><text x="1112" y="298">8C25</text></g>
                    </svg>
                </div>
                <div class="h-[27px] shrink-0 -ml-[5px] bg-[#f0f0f0] border-t-2 border-white pt-1 flex gap-0.5 [font-family:'DejaVu_Sans_Mono','Noto_Sans_CJK_SC',monospace]">
                    <span class="w-[148px] border border-[#d8d8d8] border-l-0 flex items-center pl-2 text-[10px]">(X: 675 Y: 749)</span>
                    <span class="flex-1 border border-[#d8d8d8] bg-linear-to-b from-[#fcfcfc] to-[#eee] flex items-center">请指定起点所在纵筋或网格交点，按右键终止或<span class="text-[10px]">ESC</span>键取消</span>
                </div>
            </div>
        </section>
    </main>

    <!-- status bar -->
    <footer class="h-[22px] shrink-0 flex gap-0.5 pt-0.5 [font-family:'DejaVu_Sans_Mono','Noto_Sans_CJK_SC',monospace] [&>span]:border [&>span]:border-[#d8d8d8] [&>span]:bg-linear-to-b [&>span]:from-[#fcfcfc] [&>span]:to-[#eee] [&>span]:pl-px [&>span]:leading-[18px]">
        <span class="w-[148px]"></span>
        <span class="w-[78px]">层高<i class="not-italic text-[10px]">:2.8m</i></span>
        <span class="w-[98px]">底标高<i class="not-italic text-[10px]">:20.35m</i></span>
        <span class="w-12 text-[10px]">0</span>
        <span class="flex-1">名称在当前层当前构件类型下不允许重名</span>
        <span class="w-[70px] text-[10px]">265.4 FPS</span>
    </footer>

    <!-- windows taskbar -->
    <footer class="h-10 shrink-0 flex bg-[#020b0e] text-white">
        <button aria-label="开始" class="w-12 bg-black flex items-center justify-center"><svg class="size-4" viewBox="0 0 16 16"><path d="M0 2.300 6.500 1.400v6.200H0zM7.300 1.300 16 0v7.600H7.300zM0 8.400h6.500v6.200L0 13.700zM7.300 8.400H16V16l-8.700-1.300z" fill="#fff"/></svg></button>
        <label class="w-[344px] bg-[#333] flex items-center pl-2 pr-3.5 gap-1">
            <svg class="size-6" viewBox="0 0 24 24"><circle cx="12" cy="12" r="9.500" fill="none" stroke="#eee" stroke-width="2.800"/></svg>
            <input type="text" placeholder="在这里输入你要搜索的内容" class="flex-1 text-sm outline-none placeholder:text-[#999]">
            <svg class="w-3 h-4" viewBox="0 0 12 16"><rect x="3.500" y=".5" width="5" height="9" rx="2.500" fill="none" stroke="#999"/><path d="M1 8v2q0 2 5 2t5-2V8M6 12v3.500M3 15.500h6" fill="none" stroke="#999"/></svg>
        </label>
        <div class="flex [&>button]:flex [&>button]:items-center [&>button]:justify-center">
            <button class="w-12" aria-label="任务视图"><svg class="w-5 h-4" viewBox="0 0 20 16"><path d="M4.500 1.500h11v13h-11zM2.500 3.500h-2v9h2M17.500 3.500h2v9h-2" fill="none" stroke="#fff"/></svg></button>
            <button class="w-[52px]" aria-label="应用"><svg class="size-6" viewBox="0 0 24 24"><g fill="#eee"><path id="petal" d="M11.500 11.500Q2 13 1.500 7T8 1q6 0 6 4.500-4-1-4 2.500 0 2 1.500 3.500z"/><use href="#petal" transform="rotate(90 12 12)"/><use href="#petal" transform="rotate(180 12 12)"/><use href="#petal" transform="rotate(270 12 12)"/></g></svg></button>
            <button class="w-[52px]" aria-label="浏览器"><svg class="size-6" viewBox="0 0 24 24"><path d="M20 15q-2 5-8 5t-7-7q0-8 7-8t8 8H8" fill="none" stroke="#eee" stroke-width="3.200"/><path d="M4 22Q0 20 8 10T22 2" fill="none" stroke="#eee" stroke-width="1.600"/></svg></button>
            <button class="w-[52px]" aria-label="提醒"><svg class="w-7 h-7" viewBox="0 0 28 28"><circle cx="12" cy="15" r="8.500" fill="none" stroke="#ccc" stroke-width="1.500"/><path d="M17 12q-5-4-7 1t4 6q4-1 3-4h-4M15 11q-3-2-4 2" fill="none" stroke="#ddd" stroke-width="1.600"/><path d="M20 1q4 1 4 6v3l2 2H14l2-2V7q0-5 4-6z" fill="#f0b010"/></svg></button>
            <button class="w-[52px]" aria-label="Edge"><svg class="size-6" viewBox="0 0 24 24"><path d="M2 11Q4 2 12 2t10 9v3H9q0 5 6 5 3 0 5-1.500V21q-3 2-7 2-9-1-9-9 0-5 5-7-6 0-7 4zM9 10.500h7q0-4-3.500-4T9 10.500z" fill="#0a78d6"/></svg></button>
            <button class="w-[47px]" aria-label="Internet Explorer"><svg class="size-6" viewBox="0 0 24 24"><path d="M20 15q-2 5-8 5t-7-7q0-8 7-8t8 8H8" fill="none" stroke="#35a6ee" stroke-width="4.600"/><path d="M4 22Q0 20 8 10T21 2t0 6" fill="none" stroke="#f6cf2c" stroke-width="2.200"/></svg></button>
            <button class="w-[50px]" aria-label="文件资源管理器"><svg class="size-6" viewBox="0 0 24 24"><path d="M2 3h8l2 3h10v15H2z" fill="#ffe08a"/><path d="M2 3h8v3H2z" fill="#f5bb30"/><path d="M6 13h12v9h-3v-4H9v4H6z" fill="#3aa7e8"/></svg></button>
            <button class="w-12" aria-label="360浏览器"><span class="w-10 h-full border-b-2 border-[#76b9ed] flex items-center justify-center"><svg class="size-6" viewBox="0 0 24 24"><circle cx="12" cy="12" r="10" fill="#3ebd2c"/><path d="M18 14q-2 4-6 4t-5-5q0-6 5-6t5.500 5H9" fill="none" stroke="#fff" stroke-width="2.600"/><path d="M3 19Q4 12 18 3" fill="none" stroke="#d6f5b0"/></svg></span></button>
            <button class="w-12 bg-[#334045] border-b-2 border-[#76b9ed]" aria-label="钢筋算量"><svg class="size-6"><use href="#logo"/></svg></button>
            <button class="w-[49px]" aria-label="便笺"><span class="w-10 h-full border-b-2 border-[#76b9ed] flex items-center justify-center"><svg class="size-6" viewBox="0 0 24 24"><rect width="24" height="24" rx="2" fill="#f59a10"/><path d="M4 4h14v17H4z" fill="#fff8e2"/><path d="M6 9h9M6 12h6M6 15h8M6 18h6" stroke="#e08a20" stroke-width="1.500"/><path d="m21 3-8 11-2 4 4-3 8-11z" fill="#b35a24"/></svg></span></button>
        </div>
        <div class="ml-auto flex items-center">
            <span>链接</span>
            <p class="w-[60px] ml-3.5 text-center leading-[17px]">24%<br>CPU使用</p>
            <svg class="w-5 h-4 ml-4" viewBox="0 0 20 16"><path d="M2 6q8-7 16 0M5 9.500q5-4 10 0" fill="none" stroke="#5bd616" stroke-width="2.200"/><path d="M7.500 12q2.500-2 5 0L10 15z" fill="#5bd616"/></svg>
            <svg class="w-3 h-2 ml-3" viewBox="0 0 12 8"><path d="m1 7 5-5 5 5" fill="none" stroke="#fff" stroke-width="1.300"/></svg>
            <svg class="w-3.5 h-3.5 ml-3" viewBox="0 0 14 14"><path d="M1 13Q1 2 13 1M4 13q0-8 9-8.500M7.500 13q0-5 5.500-5" fill="none" stroke="#ccc" stroke-width="1.200"/><circle cx="12" cy="12" r="1.500" fill="#fff"/></svg>
            <svg class="w-6 h-4 ml-2" viewBox="0 0 24 16"><rect x=".5" y="1.500" width="22" height="12" fill="none" stroke="#fff"/><path d="M3 4.500h18M3 7.500h18" stroke="#fff" stroke-dasharray="2 1"/><path d="M6 10.500h11" stroke="#fff"/></svg>
            <span class="ml-2.5">中</span>
            <svg class="size-4 ml-3.5"><use href="#sogou"/></svg>
            <p class="w-[66px] ml-3 text-center leading-[19px]">19:59<br>2018/6/27</p>
            <svg class="size-4 ml-4 mr-[26px]" viewBox="0 0 16 16"><path d="M.5.500h15v11H10L8 15l-2.500-3.500h-5z" fill="none" stroke="#fff"/></svg>
        </div>
    </footer>

    <!-- floating desktop widgets -->
    <div class="absolute left-[1007px] -top-7 size-12 rounded-full bg-linear-to-b from-[#2aa54c] to-[#4cd268] border-2 border-[#bbb] shadow-md flex items-end justify-center text-white font-bold text-xs pb-1"><span>64</span></div>

    <div class="absolute left-[900px] top-[55px] w-[192px] h-6 bg-white border border-[#a9c4df] flex items-center gap-1.5 pl-[18px] text-[#1b6fc4]">
        <svg class="absolute -left-3.5 -top-1 size-7"><use href="#sogou"/></svg>
        <span class="text-[15px] font-bold">中</span>
        <svg class="size-4" viewBox="0 0 16 16"><circle cx="4" cy="5" r="2" fill="none" stroke="#1b6fc4" stroke-width="1.300"/><path d="M10 9h3v3l-2.500 3" fill="#1b6fc4" stroke="#1b6fc4"/></svg>
        <svg class="size-4" viewBox="0 0 16 16"><circle cx="8" cy="8" r="7" fill="none" stroke="#1b6fc4" stroke-width="1.600"/><path d="M5.500 5v2M10.500 5v2M4 9q4 5 8 0" fill="none" stroke="#1b6fc4" stroke-width="1.500"/></svg>
        <svg class="size-4" viewBox="0 0 16 16"><rect x="5" y="0" width="6" height="10" rx="3" fill="#1b6fc4"/><path d="M2.500 7q0 5 5.500 5t5.500-5M8 12v3M5 15h6" fill="none" stroke="#1b6fc4" stroke-width="1.600"/></svg>
        <svg class="size-4" viewBox="0 0 16 16"><rect x=".7" y="2.700" width="14.600" height="10.600" fill="none" stroke="#1b6fc4" stroke-width="1.400"/><path d="M3 5.500h10M3 8h10" stroke="#1b6fc4" stroke-width="1.400" stroke-dasharray="2 1"/><path d="M4 11h8" stroke="#1b6fc4" stroke-width="1.400"/></svg>
        <svg class="size-4" viewBox="0 0 16 16"><circle cx="6" cy="4" r="3" fill="#b6c6dc"/><path d="M0 14q0-6 6-6t6 2v4z" fill="#b6c6dc"/><path d="M8 10h3v2H8v3h3M13 10v5h2.500v-5" fill="none" stroke="#8095b4"/></svg>
        <svg class="size-4" viewBox="0 0 16 16"><path d="M5 1q3 2 6 0l5 3-2 4-2-1v8H4V7L2 8 0 4z" fill="#1b6fc4"/></svg>
        <svg class="size-4" viewBox="0 0 16 16"><path d="m2 14 7-7" stroke="#1b6fc4" stroke-width="3.200"/><path d="M13 1 10 4l2 2 3-3q2 6-4 6-5-2-2-7 2-2 4-1z" fill="#1b6fc4"/></svg>
    </div>

    <div class="absolute left-[1075px] top-[83px] w-[120px] h-[50px] rounded-full bg-white shadow-md shadow-black/50 flex items-center pl-1.5 gap-[5px] text-[#666]">
        <svg class="w-[38px] h-[38px]" viewBox="0 0 38 38"><circle cx="19" cy="19" r="19" fill="#26c96f"/><path d="M6 16q13-13 26 0M10 21q9-9 18 0M14 25q5-5 10 0" fill="none" stroke="#fff" stroke-width="2.800"/><circle cx="19" cy="28.500" r="2" fill="#fff"/></svg>
        <div class="leading-5 text-[11px]">
            <p class="flex items-center gap-1"><svg class="w-3 h-3" viewBox="0 0 12 12"><path d="M4 1v10L1 8" fill="none" stroke="#26c96f" stroke-width="2"/><path d="M8 11V1l3 3" fill="none" stroke="#f08020" stroke-width="2"/></svg>0.00K/s</p>
            <p class="flex items-center gap-1"><svg class="w-3 h-3" viewBox="0 0 12 12"><path d="M3 2v9h6V3H2" fill="none" stroke="#26c96f" stroke-width="1.500"/><path d="M2 7h8v5H2zM2 0h2v3H2z" fill="#26c96f"/></svg>0</p>
        </div>
    </div>
</body>
</html>
